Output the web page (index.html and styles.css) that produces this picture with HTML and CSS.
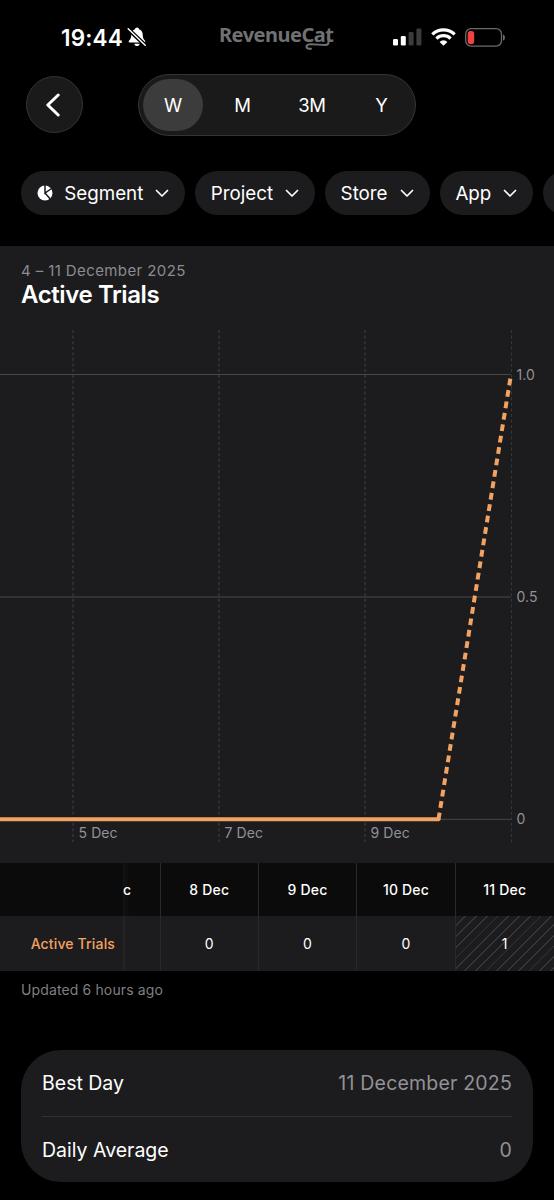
FILE: index.html
```html
<!DOCTYPE html>
<html lang="en">
<head>
  <meta charset="UTF-8" />
  <meta name="viewport" content="width=device-width, initial-scale=1.0"/>
  <title>Active Trials</title>
  <link rel="stylesheet" href="styles.css">
</head>
<body>
  <header class="status-bar">
    <div class="status-left">
      <span class="time">19:44</span>
      <svg class="bell" width="20" height="20" viewBox="0 0 20 20">
        <path fill="#fff" d="M10 .5c-1.100 0-1.900.8-2 1.700C5.600 3 4.300 5 4.300 7.600c0 3.200-.8 4.700-2.200 6-.8.800-.5 2 .6 2h14.600c1.100 0 1.400-1.200.6-2-1.400-1.300-2.200-2.800-2.200-6C15.700 5 14.400 3 12 2.200 11.900 1.300 11.100.5 10 .5zM7.300 16.800c.3 1.500 1.400 2.300 2.700 2.300s2.400-.8 2.700-2.300z"/>
        <path stroke="#000" stroke-width="4" d="M.5 1.500l18 17"/>
        <path stroke="#fff" stroke-width="1.500" stroke-linecap="round" d="M1.200 1.800l17 16.400"/>
      </svg>
    </div>
    <div class="logo">
      <span>RevenueCat</span>
      <svg class="tail" width="28" height="14" viewBox="0 0 28 14">
        <path fill="none" stroke="#717173" stroke-width="2" stroke-linecap="round" d="M25.500 0v6c0 2-1 3-3 3-5 0-9-.8-15-.8-5 0-5.200 4.600-1.300 4.600H8"/>
      </svg>
    </div>
    <div class="status-right">
      <svg width="29" height="18" viewBox="0 0 29 18">
        <rect x="0" y="11" width="5" height="6.500" rx="1.300" fill="#fff"/>
        <rect x="7.800" y="8" width="5" height="9.500" rx="1.300" fill="#fff"/>
        <rect x="15.600" y="4" width="5" height="13.500" rx="1.300" fill="#3b3b3b"/>
        <rect x="23.400" y="0.500" width="5" height="17" rx="1.300" fill="#3b3b3b"/>
      </svg>
      <svg width="25" height="18" viewBox="0 0 25 18">
        <g fill="none" stroke="#fff" stroke-width="3.200">
          <path d="M1.300 6.400a16.200 16.200 0 0 1 22.400 0"/>
          <path d="M5.400 10.600a10.200 10.200 0 0 1 14.200 0"/>
        </g>
        <path fill="#fff" d="M12.500 17.800L8.600 13.900a5.600 5.600 0 0 1 7.800 0z"/>
      </svg>
      <svg width="41" height="19" viewBox="0 0 41 19">
        <rect x="0.700" y="0.700" width="35.800" height="17.400" rx="5.300" fill="none" stroke="#6b6b6b" stroke-width="1.300"/>
        <rect x="2.700" y="3" width="6.500" height="13" rx="2.800" fill="#f0433f"/>
        <path fill="#6b6b6b" d="M38 6.400c2.600.8 2.600 5.400 0 6.200z"/>
      </svg>
    </div>
  </header>

  <nav class="toolbar">
    <a href="#" class="back" aria-label="Back">
      <svg width="16" height="24" viewBox="0 0 16 24">
        <path fill="none" stroke="#fff" stroke-width="3" stroke-linecap="round" stroke-linejoin="round" d="M13.200 2L2.800 12l10.400 10"/>
      </svg>
    </a>
    <div class="periods">
      <button class="active">W</button>
      <button>M</button>
      <button>3M</button>
      <button>Y</button>
    </div>
  </nav>

  <div class="filters">
    <button class="chip chip-segment">
      <svg width="16" height="16" viewBox="0 0 16 16">
        <circle cx="8" cy="8" r="7.500" fill="#fff"/>
        <path fill="none" stroke="#1c1c1e" stroke-width="1.500" d="M8 0v8l6.500-4.500M8 8l5 5.800"/>
      </svg>
      <span>Segment</span>
      <svg class="chevron" width="14" height="9" viewBox="0 0 14 9"><path d="M1.500 1.500L7 7l5.500-5.500"/></svg>
    </button>
    <button class="chip chip-project">
      <span>Project</span>
      <svg class="chevron" width="14" height="9" viewBox="0 0 14 9"><path d="M1.500 1.500L7 7l5.500-5.500"/></svg>
    </button>
    <button class="chip chip-store">
      <span>Store</span>
      <svg class="chevron" width="14" height="9" viewBox="0 0 14 9"><path d="M1.500 1.500L7 7l5.500-5.500"/></svg>
    </button>
    <button class="chip chip-app">
      <span>App</span>
      <svg class="chevron" width="14" height="9" viewBox="0 0 14 9"><path d="M1.500 1.500L7 7l5.500-5.500"/></svg>
    </button>
    <button class="chip chip-next" aria-label="More filters"></button>
  </div>

  <main>
    <section class="chart-section">
      <p class="range">4 – 11 December 2025</p>
      <h1>Active Trials</h1>
      <svg class="chart" width="554" height="530" viewBox="0 0 554 530">
        <g class="grid-x">
          <path d="M73 10v512M219 10v512M365 10v512"/>
          <path class="last" d="M511.500 10v512"/>
        </g>
        <g class="grid-y">
          <path d="M0 54.500h511M0 277h511M0 499.300h511"/>
        </g>
        <g class="labels">
          <text x="516.500" y="59.500">1.0</text>
          <text x="516.500" y="282">0.5</text>
          <text x="516.500" y="504.300">0</text>
          <text x="78.500" y="518">5 Dec</text>
          <text x="224.500" y="518">7 Dec</text>
          <text x="370.500" y="518">9 Dec</text>
        </g>
        <path class="line" d="M0 499.300H438.500"/>
        <circle cx="438.500" cy="499.300" r="2" fill="#f4a261"/>
        <path class="line projected" d="M438.500 499.300L511 54.500"/>
      </svg>
    </section>

    <section class="table">
      <div class="row head">
        <div class="name"></div>
        <div class="clipped">c</div>
        <div>8 Dec</div>
        <div>9 Dec</div>
        <div>10 Dec</div>
        <div>11 Dec</div>
      </div>
      <div class="row values">
        <div class="name">Active Trials</div>
        <div class="clipped"></div>
        <div>0</div>
        <div>0</div>
        <div>0</div>
        <div class="incomplete">1</div>
      </div>
    </section>
    <p class="updated">Updated 6 hours ago</p>

    <section class="summary">
      <div class="summary-row"><span>Best Day</span><span class="value">11 December 2025</span></div>
      <div class="summary-row"><span>Daily Average</span><span class="value">0</span></div>
    </section>
  </main>
</body>
</html>
```
FILE: styles.css
```css
* {
  box-sizing: border-box;
}

body {
  font-family: Inter, "Liberation Sans", sans-serif;
  margin: 0;
  height: 1200px;
  overflow: hidden;
  background-color: #000;
  color: #fff;
}

button {
  font: inherit;
  color: inherit;
  background: none;
  border: none;
  padding: 0;
}

h1, p {
  margin: 0;
}

svg {
  display: block;
  flex: none;
}

.status-bar {
  height: 74px;
  display: grid;
  grid-template-columns: 219px 115px 1fr;
  align-items: start;
}

.status-left {
  display: flex;
  padding: 25px 0 0 61px;
  gap: 5px;
}

.time {
  font-size: 22.5px;
  line-height: 26px;
  font-weight: 600;
  width: 61px;
  letter-spacing: 0.15px;
  white-space: nowrap;
}

.bell {
  margin-top: 2px;
}

.logo {
  position: relative;
  padding-top: 22px;
  color: #717173;
  font-family: "Noto Sans", sans-serif;
  font-size: 20px;
  line-height: 26px;
  font-weight: 700;
  letter-spacing: -0.5px;
}

.tail {
  position: absolute;
  left: 84px;
  top: 36px;
}

.status-right {
  display: flex;
  gap: 9px;
  padding: 28px 0 0 59px;
}

.toolbar {
  display: flex;
  align-items: center;
  gap: 55px;
  height: 62px;
  padding-left: 26px;
}

.back {
  display: flex;
  align-items: center;
  justify-content: center;
  width: 57px;
  height: 57px;
  margin-top: -1px;
  padding-right: 4px;
  border: 1px solid #343434;
  border-radius: 50%;
  background-color: #1a1a1a;
}

.periods {
  display: grid;
  grid-template-columns: 60px 69px 60px 69px;
  column-gap: 5px;
  width: 278px;
  height: 62px;
  padding: 4px;
  border: 1px solid #343434;
  border-radius: 31px;
  background-color: #1a1a1a;
}

.periods button {
  border-radius: 26px;
  font-size: 18.5px;
  letter-spacing: -0.2px;
}

.periods .active {
  background-color: #3c3c3d;
}

.filters {
  display: flex;
  gap: 10.300px;
  padding: 35px 0 31px 21px;
  overflow: hidden;
}

.chip {
  display: flex;
  flex: none;
  align-items: center;
  justify-content: space-between;
  height: 44px;
  padding: 0 16px 0 15.500px;
  border-radius: 22px;
  background-color: #1c1c1e;
  font-size: 18.800px;
}

.chip-segment {
  width: 164px;
}

.chip-project {
  width: 119.500px;
}

.chip-store {
  width: 104.500px;
}

.chip-app {
  width: 93px;
}

.chip-next {
  width: 120px;
}

.chevron {
  fill: none;
  stroke: #fff;
  stroke-width: 1.7;
  stroke-linecap: round;
  stroke-linejoin: round;
}

.chart-section {
  height: 617px;
  padding-top: 15px;
  background-color: #1c1c1e;
}

.range {
  padding-left: 21px;
  font-size: 15px;
  line-height: 20px;
  letter-spacing: 0.4px;
  color: #8b8b90;
}

h1 {
  padding-left: 21px;
  font-size: 24px;
  line-height: 28px;
  font-weight: 600;
  letter-spacing: -0.4px;
}

.chart {
  margin-top: 11px;
}

.grid-x path {
  stroke: #424244;
  stroke-width: 1;
  stroke-dasharray: 3 2.6;
}

.grid-x .last {
  stroke: #37373a;
}

.grid-y path {
  stroke: #48484a;
  stroke-width: 1;
}

.labels text {
  fill: #919196;
  font-size: 14px;
  letter-spacing: 0.1px;
}

.line {
  fill: none;
  stroke: #f4a261;
  stroke-width: 4;
}

.projected {
  stroke-dasharray: 6.800 4.770;
}

.row {
  display: grid;
  grid-template-columns: 123px 36.500px 98.400px 98.400px 98.400px 99.300px;
  height: 53px;
  font-size: 14px;
  font-weight: 500;
  letter-spacing: 0.2px;
}

.row > div {
  display: flex;
  align-items: center;
  justify-content: center;
  border-left: 1px solid #29292b;
}

.row > .name {
  justify-content: flex-end;
  padding-right: 8px;
  border-left: none;
  color: #f4a261;
  letter-spacing: 0.15px;
}

.row > .clipped {
  justify-content: flex-start;
  border-left: 2px solid #232325;
  overflow: hidden;
}

.head {
  background-color: #0b0b0b;
}

.head > .clipped {
  border-left: none;
  background: linear-gradient(90deg, #131313, #0b0b0b 6px);
}

.values {
  height: 55px;
  background-color: #1c1c1e;
  font-weight: 400;
}

.values .name {
  font-weight: 500;
}

.incomplete {
  background: repeating-linear-gradient(135deg, #1c1c1e 0, #1c1c1e 6.300px, #363638 6.300px, #363638 7.600px);
}

.updated {
  padding: 9px 0 0 21px;
  font-size: 14px;
  line-height: 20px;
  letter-spacing: 0.13px;
  color: #7f7f84;
}

.summary {
  margin: 50px 21px 0;
  padding: 0 21px;
  height: 132px;
  border-radius: 40px;
  background-color: #1c1c1e;
  font-size: 19.500px;
}

.summary-row {
  display: flex;
  align-items: center;
  justify-content: space-between;
  height: 66px;
}

.summary-row + .summary-row {
  border-top: 1px solid #313133;
}

.value {
  color: #929297;
  letter-spacing: 0.2px;
}
```
